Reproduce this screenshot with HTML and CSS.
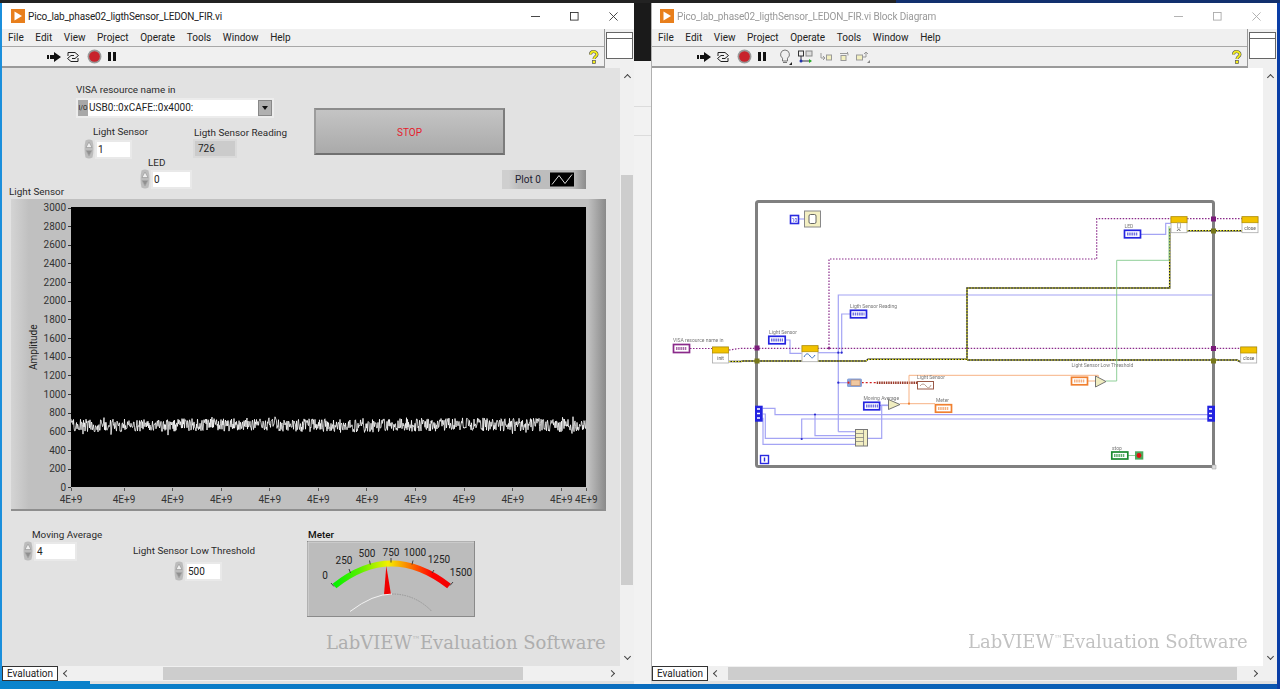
FILE: index.html
```html
<!DOCTYPE html>
<html lang="en">
<head>
<meta charset="utf-8">
<title>LabVIEW</title>
<link rel="stylesheet" href="styles.css">
</head>
<body>
<svg class="defs" width="0" height="0" aria-hidden="true">
  <symbol id="vi" viewBox="0 0 14 14"><rect width="14" height="14" fill="#e87f1c"/><path d="M3.5 2.5 11 7l-7.5 4.5z" fill="#fff"/></symbol>
  <symbol id="run" viewBox="0 0 14 10"><path d="M0 3h2v4H0zM3 3h4V0l7 5-7 5V7H3z" fill="#111"/></symbol>
  <symbol id="cont" viewBox="0 0 14 14"><g fill="none" stroke="#222"><path d="M2 6V2.500h7l3.500 3-3.500 3H6"/><path d="M12 8v3.500H5l-3.500-3 3.500-3h3"/></g></symbol>
  <symbol id="abort" viewBox="0 0 14 14"><circle cx="7" cy="7" r="6.500" fill="#999"/><circle cx="7" cy="7" r="5" fill="#c8232c"/></symbol>
  <symbol id="pause" viewBox="0 0 8 9"><path d="M0 0h3v9H0zM5 0h3v9H5z" fill="#111"/></symbol>
  <symbol id="help" viewBox="0 0 10 14"><path d="M2 4.500C2 2.500 3.500 1.500 5 1.500S8.500 2.500 8.500 4.500 5.500 6.500 5.500 9" fill="none" stroke="#555" stroke-width="3"/><path d="M2 4.500C2 2.500 3.500 1.500 5 1.500S8.500 2.500 8.500 4.500 5.500 6.500 5.500 9" fill="none" stroke="#f4ee1a" stroke-width="1.800"/><rect x="4" y="10.500" width="3" height="3" fill="#f4ee1a" stroke="#555" stroke-width=".7"/></symbol>
  <symbol id="spin" viewBox="0 0 11 20"><path d="M2 1.500Q5.500-.5 9 1.500 11 10 9 18.500 5.500 20.500 2 18.500 0 10 2 1.500z" fill="#bcbcbc"/><path d="M5.500 3 8.500 8.500h-6z" fill="#efefef" stroke="#9a9a9a" stroke-width=".7"/><path d="M5.500 17 8.500 11.500h-6z" fill="#909090" stroke="#a8a8a8" stroke-width=".7"/></symbol>
</svg>

<div class="desk">
  <div class="edge-top"></div>
  <div class="edge-left"></div>
  <div class="edge-bottom"></div>
  <div class="edge-right"></div>
  <div class="sill"></div>
  <div class="gap-dark"></div>
  <div class="gap-light"><span class="gap-line"></span><span class="gap-line"></span></div>

  <section class="win win-front">
    <header class="title">
      <svg class="vi-icon"><use href="#vi"/></svg>
      <span class="title-text">Pico_lab_phase02_ligthSensor_LEDON_FIR.vi</span>
      <div class="caption">
        <svg viewBox="0 0 10 10"><path d="M0 5h10"/></svg>
        <svg viewBox="0 0 10 10"><rect x=".5" y=".5" width="8.500" height="8.500"/></svg>
        <svg viewBox="0 0 10 10"><path d="M.5.500l9 9M9.500.500l-9 9"/></svg>
      </div>
    </header>
    <div class="chrome">
      <div class="bars">
        <nav class="menu"><span>File</span><span>Edit</span><span>View</span><span>Project</span><span>Operate</span><span>Tools</span><span>Window</span><span>Help</span></nav>
        <div class="tools">
          <svg class="t-run"><use href="#run"/></svg>
          <svg class="t-cont"><use href="#cont"/></svg>
          <svg class="t-abort"><use href="#abort"/></svg>
          <svg class="t-pause"><use href="#pause"/></svg>
          <svg class="t-help"><use href="#help"/></svg>
        </div>
      </div>
      <div class="pane-box"><span class="pane-inner"></span></div>
    </div>
    <div class="body">
      <div class="canvas">
        <label class="lbl l-visa">VISA resource name in</label>
        <div class="visa">
          <span class="visa-io">I/O</span>
          <span class="visa-text">USB0::0xCAFE::0x4000:</span>
          <span class="visa-btn"></span>
        </div>
        <label class="lbl l-ls">Light Sensor</label>
        <div class="num n-ls"><svg class="spin"><use href="#spin"/></svg><span class="field">1</span></div>
        <label class="lbl l-read">Ligth Sensor Reading</label>
        <div class="ind">726</div>
        <label class="lbl l-led">LED</label>
        <div class="num n-led"><svg class="spin"><use href="#spin"/></svg><span class="field">0</span></div>
        <button class="stop">STOP</button>
        <div class="legend"><span>Plot 0</span><svg viewBox="0 0 24 14"><rect width="24" height="14" fill="#000"/><path d="M2 12 9 3l6 8 7-9" fill="none" stroke="#ddd"/></svg></div>
        <label class="lbl l-graph">Light Sensor</label>

        <div class="graph">
          <div class="axis-title">Amplitude</div>
          <div class="yscale">
            <span>3000</span><span>2800</span><span>2600</span><span>2400</span><span>2200</span><span>2000</span><span>1800</span><span>1600</span><span>1400</span><span>1200</span><span>1000</span><span>800</span><span>600</span><span>400</span><span>200</span><span>0</span>
          </div>
          <div class="plot"><svg viewBox="0 0 515 280" preserveAspectRatio="none"><polyline id="trace" fill="none" stroke="#fff" stroke-width=".8"/></svg></div>
          <div class="xscale">
            <span>4E+9</span><span>4E+9</span><span>4E+9</span><span>4E+9</span><span>4E+9</span><span>4E+9</span><span>4E+9</span><span>4E+9</span><span>4E+9</span><span>4E+9</span><span>4E+9</span><span>4E+9</span>
          </div>
        </div>

        <label class="lbl l-ma">Moving Average</label>
        <div class="num n-ma"><svg class="spin"><use href="#spin"/></svg><span class="field">4</span></div>
        <label class="lbl l-th">Light Sensor Low Threshold</label>
        <div class="num n-th"><svg class="spin"><use href="#spin"/></svg><span class="field">500</span></div>
        <label class="lbl l-meter">Meter</label>
        <svg class="meter" viewBox="307 541 168 76">
          <defs>
            <linearGradient id="mg" gradientUnits="userSpaceOnUse" x1="333" y1="0" x2="450" y2="0">
              <stop offset="0" stop-color="#00f000"/><stop offset=".22" stop-color="#55f000"/><stop offset=".47" stop-color="#f4f000"/><stop offset=".72" stop-color="#ff5000"/><stop offset=".85" stop-color="#ff0000"/><stop offset="1" stop-color="#f00000"/>
            </linearGradient>
          </defs>
          <rect x="307.500" y="541.500" width="167" height="75" fill="#bcbcbc" stroke="#8a8a8a"/>
          <path d="M308 542H474M308 542V616" stroke="#d8d8d8" fill="none"/>
          <path d="M334.500 586Q391 541 449 586" fill="none" stroke="url(#mg)" stroke-width="6"/>
          <g stroke="#333" stroke-width=".9"><path d="M331 583l3 3.500M349 569l1.500 4M369.500 560.500l.8 4M391 558V562.500M413 560.500l-1 4M434 570l-2 3M453 582l-3 3.500"/></g>
          <g class="m-text">
            <text x="325" y="579" text-anchor="middle">0</text>
            <text x="344" y="564" text-anchor="middle">250</text>
            <text x="367" y="557" text-anchor="middle">500</text>
            <text x="391" y="556" text-anchor="middle">750</text>
            <text x="415" y="556" text-anchor="middle">1000</text>
            <text x="439" y="563" text-anchor="middle">1250</text>
            <text x="461" y="576" text-anchor="middle">1500</text>
          </g>
          <path d="M386.300 566 384 594.500h7z" fill="#f00000"/>
          <path d="M350 611.500Q373 594 392 594" fill="none" stroke="#f2f2f2" stroke-width="1"/>
          <path d="M392 594Q415 594 432 611.500" fill="none" stroke="#8e8e8e" stroke-width=".8" stroke-dasharray="1.500 1"/>
        </svg>
        <div class="mark m-front">LabVIEW<sup>™</sup>Evaluation Software</div>
      </div>
      <div class="vbar"><i class="chev up"></i><b class="v-thumb v-f"></b><i class="chev down"></i></div>
    </div>
    <footer class="hrow">
      <span class="eval">Evaluation</span>
      <div class="hbar"><i class="chev left"></i><b class="h-thumb h-f"></b><i class="chev right"></i></div>
      <span class="corner"></span>
    </footer>
  </section>

  <section class="win win-diagram">
    <header class="title">
      <svg class="vi-icon"><use href="#vi"/></svg>
      <span class="title-text dim">Pico_lab_phase02_ligthSensor_LEDON_FIR.vi Block Diagram</span>
      <div class="caption dim-cap">
        <svg viewBox="0 0 10 10"><path d="M0 5h10"/></svg>
        <svg viewBox="0 0 10 10"><rect x=".5" y=".5" width="8.500" height="8.500"/></svg>
        <svg viewBox="0 0 10 10"><path d="M.5.500l9 9M9.500.500l-9 9"/></svg>
      </div>
    </header>
    <div class="chrome">
      <div class="bars">
        <nav class="menu"><span>File</span><span>Edit</span><span>View</span><span>Project</span><span>Operate</span><span>Tools</span><span>Window</span><span>Help</span></nav>
        <div class="tools">
          <svg class="t-run"><use href="#run"/></svg>
          <svg class="t-cont"><use href="#cont"/></svg>
          <svg class="t-abort"><use href="#abort"/></svg>
          <svg class="t-pause"><use href="#pause"/></svg>
          <svg class="t-bulb" viewBox="0 0 14 16"><path d="M7 1a4.500 4.500 0 0 0-2.500 8.200V12h5V9.200A4.500 4.500 0 0 0 7 1z" fill="#eee" stroke="#777"/><path d="M5 13.500h4" stroke="#777"/><path d="M11 16l3-3v3z" fill="#222"/></svg>
          <svg class="t-probe" viewBox="0 0 15 14"><rect x=".5" y="1" width="5" height="5" fill="#eee" stroke="#333"/><rect x="8" y="1" width="6" height="5" fill="#ddd" stroke="#888"/><path d="M3 6v5h8" stroke="#334" fill="none"/><circle cx="3" cy="11" r="1.500" fill="#23a"/><path d="M11 9l3 2-3 2z" fill="#2a2"/></svg>
          <svg class="t-step1" viewBox="0 0 12 10"><path d="M1 1v5h4M3 4 5 6 3 8" fill="none" stroke="#999"/><rect x="6.500" y="3" width="5" height="5" fill="#f3f0c0" stroke="#999"/></svg>
          <svg class="t-step2" viewBox="0 0 12 10"><path d="M1 2h8v2M7 2.500 9 .500" fill="none" stroke="#999"/><rect x="2" y="4" width="5" height="5" fill="#f3f0c0" stroke="#999"/></svg>
          <svg class="t-step3" viewBox="0 0 14 12"><rect x=".5" y="4" width="6" height="5" fill="#f3f0c0" stroke="#999"/><path d="M7 6h3V1M8 3l2-2 2 2" fill="none" stroke="#999"/><path d="M11 12l3-3v3z" fill="#888"/></svg>
          <svg class="t-help"><use href="#help"/></svg>
        </div>
      </div>
      <div class="pane-box"><span class="pane-inner"></span></div>
    </div>
    <div class="body">
      <div class="canvas canvas-white">
        <svg class="diagram" viewBox="652 68 612 598">
          <!-- while loop -->
          <rect x="756.500" y="201.500" width="457" height="265" rx="2" fill="none" stroke="#808080" stroke-width="3"/>
          <path d="M1212 465h4v4h-4z" fill="#ddd" stroke="#999" stroke-width=".5"/>

          <!-- int wires -->
          <g class="w-int">
            <path d="M799 219h5"/>
            <path d="M785.700 340h4.300v13.300h11.700"/>
            <path d="M817.700 352.700h24"/>
            <path d="M841.700 352.700V314H850"/>
            <path d="M838.300 431.700V295H1212"/>
            <path d="M838.300 382.700h9"/>
            <path d="M762.700 408.300H775v6.400H1208"/>
            <path d="M801.700 439V419H1208"/>
            <path d="M762.700 414H765.300V438.300H855.300"/>
            <path d="M762.700 418.300H763V444.300H855.300"/>
            <path d="M815 414.700V435.700H855.300"/>
            <path d="M838.300 431.700H855.300"/>
            <path d="M867.300 438.300H881.700V405H888"/>
            <path d="M880 405.500h8"/>
            <path d="M1140.700 234.300H1165.700V223.300H1171"/>
          </g>
          <g fill="#2a2ad0"><circle cx="815" cy="414.500" r="1.100"/><circle cx="801.700" cy="439" r="1.100"/><circle cx="838.300" cy="352.700" r="1.100"/><circle cx="838.300" cy="382.700" r="1.100"/><circle cx="841.700" cy="352.700" r="1.100"/></g>

          <!-- visa wires -->
          <g class="w-visa">
            <path d="M690 348.500h22"/>
            <path d="M729 350l12-1.700h60"/>
            <path d="M817.700 348.300H1213H1240.700"/>
            <path d="M829 348V259H1096.700V218.700H1171"/>
            <path d="M1187 218.700h55"/>
          </g>
          <circle cx="829" cy="348.300" r="1.300" fill="#8a2a8a"/>
          <!-- error wires -->
          <g class="w-err-b">
            <path d="M729 361.500h12l2-.5h58.700"/>
            <path d="M817.700 361H866l2-1.700H967V288H1169.700V228"/>
            <path d="M967 360H1213H1237l3.700 2"/>
            <path d="M1187 230.700h55"/>
          </g>
          <g class="w-err-y">
            <path d="M729 361.500h12l2-.5h58.700"/>
            <path d="M817.700 361H866l2-1.700H967V288H1169.700V228"/>
            <path d="M967 360H1213H1237l3.700 2"/>
            <path d="M1187 230.700h55"/>
          </g>
          <!-- dynamic data -->
          <path d="M861.700 382.700h15" stroke="#d02020" stroke-width="1.200" stroke-dasharray="2 2" fill="none"/>
          <path d="M876.700 382.700H917.300" stroke="#9a3a2a" stroke-width="2.600" stroke-dasharray="1.500 .8" fill="none"/>
          <!-- orange + green -->
          <g class="w-dbl">
            <path d="M900 403.700H935"/>
            <path d="M909 403.700V375.300H1098.300V377"/>
            <path d="M1087.300 381H1095"/>
          </g>
          <circle cx="909" cy="403.700" r="1.100" fill="#f08030"/>
          <g class="w-bool">
            <path d="M1106 381H1116.700V260.300H1169V226"/>
            <path d="M1128 455.500h7"/>
          </g>

          <!-- tunnels -->
          <rect x="754.500" y="345.500" width="5" height="5" fill="#7a1a7a"/>
          <rect x="754.500" y="358.500" width="5" height="5" fill="#77771a"/>
          <rect x="1211" y="346" width="5" height="5" fill="#7a1a7a"/>
          <rect x="1211" y="358.500" width="5" height="5" fill="#77771a"/>
          <rect x="1211" y="216.500" width="5" height="5" fill="#7a1a7a"/>
          <rect x="1211" y="228.500" width="5" height="5" fill="#77771a"/>

          <!-- shift registers -->
          <g class="sr"><rect x="755" y="405.700" width="7.700" height="16"/><path d="M757 409h3M757 413.500h3M757 418h3"/></g>
          <g class="sr"><rect x="1207.300" y="405.700" width="7.700" height="16"/><path d="M1209 409h3M1209 413.500h3M1209 418h3"/></g>

          <!-- visa nodes -->
          <g class="node"><rect x="712.500" y="347" width="16" height="16"/><rect class="hd" x="712.500" y="347" width="16" height="6"/><text class="n-t" x="720.500" y="360" text-anchor="middle">init</text></g>
          <g class="node"><rect x="802" y="345.700" width="16" height="16"/><rect class="hd" x="802" y="345.700" width="16" height="6"/><path d="M804 357c2-4 4-4 6-1s3 2 5-1" fill="none" stroke="#3b6fc0" stroke-width="1"/></g>
          <g class="node"><rect x="1171" y="216.700" width="16" height="16"/><rect class="hd" x="1171" y="216.700" width="16" height="6"/><rect x="1177.500" y="223" width="3" height="5" fill="#556"/><path d="M1177 231c1-2 3-2 3 0" fill="none" stroke="#555"/></g>
          <g class="node"><rect x="1242" y="216.700" width="16" height="16"/><rect class="hd" x="1242" y="216.700" width="16" height="6"/><text class="n-t" x="1250" y="229.500" text-anchor="middle">close</text></g>
          <g class="node"><rect x="1240.700" y="347" width="16" height="16"/><rect class="hd" x="1240.700" y="347" width="16" height="6"/><text class="n-t" x="1248.700" y="360" text-anchor="middle">close</text></g>

          <!-- wait node -->
          <rect x="790.500" y="215.500" width="8" height="8" fill="#fff" stroke="#2a2ae0" stroke-width="1.600"/>
          <text class="n-t blue" x="794.500" y="221.500" text-anchor="middle">10</text>
          <rect x="804.500" y="211" width="16" height="16" fill="#f3efc2" stroke="#888"/>
          <rect x="809" y="214.500" width="7" height="9" rx="1.500" fill="#fff" stroke="#555" stroke-width=".9"/>

          <!-- terminals -->
          <g class="term tb"><rect x="768.800" y="336.300" width="16.400" height="7.500"/><path d="M771 340h12"/></g>
          <g class="term tb"><rect x="850.500" y="310.300" width="16" height="7.500" class="thin"/><path d="M852.500 314h12"/></g>
          <g class="term tb"><rect x="863.800" y="402.300" width="15.800" height="7.500"/><path d="M866 406h12"/></g>
          <g class="term tb"><rect x="1124.500" y="230.300" width="16" height="7.500"/><path d="M1127 234h11"/></g>
          <g class="term tv"><rect x="673.500" y="344.500" width="16" height="8"/><path d="M676 348.500h11"/></g>
          <g class="term to"><rect x="935.500" y="404.700" width="16" height="7.500"/><path d="M938 408.500h11"/></g>
          <g class="term to"><rect x="1071.500" y="377.300" width="16" height="7.500"/><path d="M1074 381h11"/></g>
          <g class="term tg"><rect x="1111.800" y="452" width="16" height="7"/><path d="M1114 455.500h11"/></g>
          <rect x="917.500" y="381.500" width="16" height="7.500" fill="#fff" stroke="#9a5a48"/>
          <path d="M920 386q3-4 6 0t5-1" fill="none" stroke="#a87" stroke-width=".8"/>
          <!-- subVI -->
          <rect x="847" y="378.500" width="15" height="8.500" rx="1.500" fill="#88a4dc"/>
          <rect x="851" y="380" width="9" height="5.500" fill="#f0c8a0" stroke="#b87a50" stroke-width=".5"/>
          <circle cx="848.500" cy="382.700" r="1.100" fill="#e02020"/>
          <!-- compare triangles -->
          <path d="M888.500 399.500V409.500L900 404.500z" fill="#f0edc0" stroke="#666" stroke-width=".9"/>
          <path d="M1095.500 376V387L1106 381.500z" fill="#f0edc0" stroke="#666" stroke-width=".9"/>
          <!-- build array -->
          <rect x="855.500" y="429.500" width="12" height="16.500" fill="#f3efc2" stroke="#777"/>
          <path d="M855.500 433.500h8M855.500 437.500h8M855.500 441.500h8M863.500 429.500v16.500" stroke="#777" stroke-width=".7"/>
          <!-- iteration -->
          <rect x="760.500" y="455.500" width="8" height="8" fill="#fff" stroke="#2a2ae0" stroke-width="1.400"/>
          <path d="M764.500 457.500v4" stroke="#2a2ae0" stroke-width="1.400"/>
          <!-- stop -->
          <rect x="1135" y="451.300" width="8.300" height="8.300" fill="#4caa5c"/>
          <circle cx="1139" cy="455.500" r="2.400" fill="#e01010"/>
          <!-- labels -->
          <g class="d-lbl">
            <text x="673" y="341.500">VISA resource name in</text>
            <text x="769" y="333.500">Light Sensor</text>
            <text x="850" y="307.500">Ligth Sensor Reading</text>
            <text x="917" y="379">Light Sensor</text>
            <text x="863.500" y="399.500">Moving Average</text>
            <text x="936" y="402">Meter</text>
            <text x="1071.500" y="366.500">Light Sensor Low Threshold</text>
            <text x="1124.500" y="228">LED</text>
            <text x="1112" y="449.500">stop</text>
          </g>
        </svg>
        <div class="mark m-diag">LabVIEW<sup>™</sup>Evaluation Software</div>
      </div>
      <div class="vbar vbar-plain"><i class="chev up"></i><i class="chev down"></i></div>
    </div>
    <footer class="hrow">
      <span class="eval">Evaluation</span>
      <div class="hbar"><i class="chev left"></i><b class="h-thumb h-d"></b><i class="chev right"></i></div>
      <span class="corner"></span>
    </footer>
  </section>
</div>
<script src="plot.js"></script>
</body>
</html>
```

FILE: styles.css
```css
* { box-sizing: border-box; }
html, body { margin: 0; padding: 0; }
body {
  width: 1280px; height: 689px; overflow: hidden;
  background: #0a7ac4;
  font-family: Roboto, "Open Sans", "Liberation Sans", sans-serif;
  color: #222;
}
.defs { position: absolute; }
.desk { position: relative; width: 1280px; height: 689px; overflow: hidden; filter: blur(.3px); }

.edge-top { position: absolute; left: 0; top: 0; width: 1280px; height: 3px; background: linear-gradient(90deg, #222 0 70%, #12306e 70% 100%); }
.edge-left { position: absolute; left: 0; top: 3px; width: 2px; height: 680px; background: #1b8fdc; }
.edge-bottom { position: absolute; left: 0; top: 681px; width: 1280px; height: 8px; background: linear-gradient(90deg, #0a84cc, #0a56b0); }
.edge-right { position: absolute; left: 1277px; top: 3px; width: 3px; height: 686px; background: #0a3ea6; }
.sill { position: absolute; left: 90px; top: 681px; width: 1187px; height: 3px; background: #e0e0e0; }
.gap-dark { position: absolute; left: 634px; top: 3px; width: 17px; height: 58px; background: #1a1a1a; }
.gap-light { position: absolute; left: 634px; top: 61px; width: 17px; height: 623px; background: #f2f2f2; display: flex; flex-direction: column; padding-top: 45px; gap: 28px; }
.gap-line { height: 1px; background: #dcdcdc; }

.win { position: absolute; top: 3px; height: 678px; background: #f0f0f0; display: flex; flex-direction: column; }
.win-front { left: 2px; width: 632px; }
.win-diagram { left: 651px; width: 626px; border-left: 1px solid #b0b0b0; }

.title { height: 26px; background: #fff; display: flex; align-items: center; padding-left: 9px; flex: none; }
.win-diagram .title { padding-left: 8px; }
.vi-icon { width: 14px; height: 14px; margin-right: 3px; }
.title-text { font-size: 10px; letter-spacing: -.15px; color: #222; }
.title-text.dim { color: #999; }
.caption { margin-left: auto; display: flex; align-items: center; gap: 30px; padding-right: 16px; }
.caption svg { width: 9px; height: 9px; fill: none; stroke: #333; stroke-width: 1; }
.dim-cap svg { stroke: #aaa; }

.chrome { display: flex; height: 39px; flex: none; }
.bars { flex: 1; display: flex; flex-direction: column; border-right: 1px solid #999; }
.menu { height: 18px; display: flex; gap: 11.600px; align-items: center; padding: 0 0 1px 6px; font-size: 10px; background: #f0f0f0; border-bottom: 1px solid #a8a8a8; color: #222; }
.tools { height: 21px; display: flex; align-items: center; background: #f0f0f0; border-bottom: 2px solid #9a9a9a; padding-left: 45px; }
.t-run { width: 14px; height: 10px; }
.t-cont { width: 14px; height: 14px; margin-left: 5px; }
.t-abort { width: 15px; height: 15px; margin-left: 7px; }
.t-pause { width: 8px; height: 9px; margin-left: 6px; }
.t-help { width: 11px; height: 14px; margin-left: auto; margin-right: 5px; }
.t-bulb { width: 14px; height: 16px; margin-left: 12px; }
.t-probe { width: 15px; height: 14px; margin-left: 6px; }
.t-step1 { width: 12px; height: 10px; margin-left: 7px; }
.t-step2 { width: 12px; height: 11px; margin-left: 7px; }
.t-step3 { width: 14px; height: 12px; margin-left: 5px; }

.pane-box { width: 29px; padding: 3px 0 0 1px; background: #f0f0f0; }
.pane-inner { display: block; width: 27px; height: 27px; background: linear-gradient(#fff 5px, #666 5px 6px, #fff 6px); border: 1px solid #666; }

.body { flex: 1; display: flex; min-height: 0; }
.canvas { position: relative; flex: 1; background: #e2e2e2; overflow: hidden; }
.canvas-white { background: #fff; }
.vbar { width: 14px; background: #f0f0f0; position: relative; display: flex; flex-direction: column; align-items: center; justify-content: space-between; padding: 3px 0; }
.v-thumb { position: absolute; left: 1px; width: 12px; background: #cdcdcd; }
.v-f { top: 107px; height: 410px; }
.chev { width: 5px; height: 5px; border-left: 1.500px solid #444; border-top: 1.500px solid #444; display: block; flex: none; }
.chev.up { transform: rotate(45deg); margin-top: 4px; }
.chev.down { transform: rotate(225deg); margin-bottom: 4px; }
.chev.left { transform: rotate(-45deg); }
.chev.right { transform: rotate(135deg); margin-left: auto; }

.hrow { height: 15px; display: flex; flex: none; background: #f0f0f0; }
.eval { width: 56px; height: 15px; background: #fff; border: 1px solid #333; font-size: 10px; line-height: 14px; text-align: center; flex: none; color: #222; }
.hbar { flex: 1; display: flex; align-items: center; padding: 0 6px 0 6px; position: relative; }
.h-thumb { position: absolute; top: 1px; height: 13px; background: #cdcdcd; }
.h-f { left: 105px; width: 360px; }
.h-d { left: 20px; width: 509px; }
.corner { width: 14px; flex: none; }

/* front panel: free canvas, origin at page (2,68) */
.lbl { position: absolute; font-size: 9.900px; line-height: 12px; white-space: nowrap; color: #2a2a2a; }
.l-visa { left: 74px; top: 16px; }
.l-ls { left: 91px; top: 58px; }
.l-read { left: 192px; top: 59px; }
.l-led { left: 146px; top: 89px; }
.l-graph { left: 7px; top: 118px; }
.l-ma { left: 30px; top: 461px; }
.l-th { left: 131px; top: 477px; }
.l-meter { left: 306px; top: 461px; color: #111; font-weight: 500; }

.visa { position: absolute; left: 74px; top: 30px; width: 198px; height: 20px; background: #ececec; display: flex; align-items: center; padding: 2px; }
.visa-io { width: 10px; height: 16px; background: #a8a8a8; font-size: 6.500px; line-height: 16px; text-align: center; color: #111; flex: none; }
.visa-text { flex: 1; background: #fff; height: 16px; font-size: 10px; line-height: 16px; padding-left: 1px; }
.visa-btn { width: 14px; height: 16px; background: #b0b0b0; position: relative; flex: none; border: 1px solid #888; }
.visa-btn::after { content: ""; position: absolute; left: 3px; top: 5px; border: 3px solid transparent; border-top: 4px solid #111; }

.num { position: absolute; display: flex; align-items: center; height: 20px; }
.spin { width: 12px; height: 20px; flex: none; }
.field { display: block; flex: 1; height: 19px; background: #fff; border: 2px solid #e9e9e9; font-size: 10px; line-height: 15px; padding-left: 1px; }
.n-ls { left: 81px; top: 71px; width: 49px; }
.n-led { left: 137px; top: 101px; width: 53px; }
.n-ma { left: 20px; top: 473px; width: 55px; }
.n-th { left: 171px; top: 493px; width: 49px; }
.ind { position: absolute; left: 191px; top: 71px; width: 44px; height: 19px; background: #cbcbcb; border: 2px solid #dadada; font-size: 10px; line-height: 15px; padding-left: 3px; }

.stop { position: absolute; left: 312px; top: 40px; width: 191px; height: 47px; padding: 1px 0 0; color: #e5202c; font: 10px Roboto, sans-serif; background: linear-gradient(#c4c4c4, #aaa); border: 2px solid; border-color: #8c8c8c #7c7c7c #707070 #9c9c9c; }

.legend { position: absolute; left: 500px; top: 102px; width: 84px; height: 19px; background: linear-gradient(90deg, #cfcfcf 0 8%, #bdbdbd 20% 84%, #8c8c8c); display: flex; align-items: center; gap: 9px; padding-left: 13px; font-size: 10px; color: #223; }
.legend svg { width: 24px; height: 15px; }

.graph { position: absolute; left: 9px; top: 131px; width: 595px; height: 312px; display: grid; grid-template-columns: 60px 515px; grid-template-rows: 280px 24px; padding-top: 8px; background: linear-gradient(90deg, #d4d4d4, #c0c0c0 3%, #c0c0c0 97%, #8a8a8a); border-bottom: 2px solid #8e8e8e; }
.axis-title { position: absolute; left: 17px; top: 8px; height: 280px; writing-mode: vertical-rl; transform: rotate(180deg); text-align: center; font-size: 10px; color: #222; }
.yscale { grid-column: 1; grid-row: 1; display: flex; flex-direction: column; justify-content: space-between; align-items: flex-end; margin: -5px 0 -7px; font-size: 10px; line-height: 12px; color: #333; }
.yscale span { display: flex; align-items: center; gap: 2px; }
.yscale span::after { content: ""; width: 3px; height: 1px; background: #333; }
.plot { grid-column: 2; grid-row: 1; background: #000; }
.plot svg { display: block; width: 515px; height: 280px; }
.xscale { grid-column: 1 / 3; grid-row: 2; display: grid; grid-template-columns: 60px 53px repeat(9, 48.600px) 25px 0; font-size: 10px; color: #333; padding-top: 2px; }
.xscale span { position: relative; width: 0; white-space: nowrap; display: flex; justify-content: center; padding-top: 5px; line-height: 12px; }
.xscale span:first-child { grid-column: 2; }
.xscale span::before { content: ""; position: absolute; top: -1px; width: 1px; height: 3px; background: #555; }

.meter { position: absolute; left: 305px; top: 473px; width: 168px; height: 76px; }
.m-text text { font: 10px Roboto, sans-serif; fill: #222; }

.mark { position: absolute; font-family: "DejaVu Serif", serif; font-size: 18px; color: #aeaeae; white-space: nowrap; line-height: 22px; }
.mark sup { font-size: 8px; line-height: 0; vertical-align: 7px; }
.m-front { left: 324px; top: 564px; }
.m-diag { left: 316px; top: 563px; color: #c2c2c2; }

.diagram { display: block; width: 612px; height: 598px; filter: blur(.25px); }
.w-int path { fill: none; stroke: #a4a4f4; stroke-width: 1.200; }
.w-visa path { fill: none; stroke: #8a2a8a; stroke-width: 1.200; stroke-dasharray: 1.500 1.500; }
.w-err-b path { fill: none; stroke: #222; stroke-width: 1.500; }
.w-err-y path { fill: none; stroke: #e8e820; stroke-width: 1.200; stroke-dasharray: 1.500 1.500; }
.w-dbl path { fill: none; stroke: #f7b284; stroke-width: 1; }
.w-bool path { fill: none; stroke: #8fcf98; stroke-width: 1; }
.sr rect { fill: #2222e0; }
.sr path { stroke: #fff; stroke-width: 1.500; fill: none; }
.node rect { fill: #fff; stroke: #aaa; stroke-width: .8; }
.node .hd { fill: #f2c200; stroke: #b89400; }
.n-t { font: 4.800px Roboto, sans-serif; fill: #555; }
.n-t.blue { fill: #2a2ae0; }
.term rect { fill: #fff; stroke-width: 1.700; }
.term path { stroke-width: 2.800; stroke-dasharray: 1.500 .7; fill: none; }
.tb rect { stroke: #2525e0; } .tb path { stroke: #7070e0; }
.tv rect { stroke: #8a2a8a; } .tv path { stroke: #a868a8; }
.to rect { stroke: #f08030; } .to path { stroke: #f4b080; }
.tg rect { stroke: #1a8a30; } .tg path { stroke: #60b070; }
.d-lbl text { font: 5px Roboto, sans-serif; fill: #777; }
```

FILE: plot.js
```js
// Noise trace of the Light Sensor chart (about 660 counts, +/- 90).
(function () {
  var seed = 4021;
  function rnd() {
    seed = (seed * 16807) % 2147483647;
    return seed / 2147483647;
  }
  var pts = [];
  for (var x = 0; x <= 515; x += 0.5) {
    var wander = Math.sin(x / 37) + 0.6 * Math.sin(x / 11);
    var y = 218 + wander * 0.6 + (rnd() - 0.5) * 13 + (rnd() < 0.08 ? (rnd() - 0.5) * 10 : 0);
    pts.push(x.toFixed(1) + "," + y.toFixed(1));
  }
  document.getElementById("trace").setAttribute("points", pts.join(" "));
})();
```
